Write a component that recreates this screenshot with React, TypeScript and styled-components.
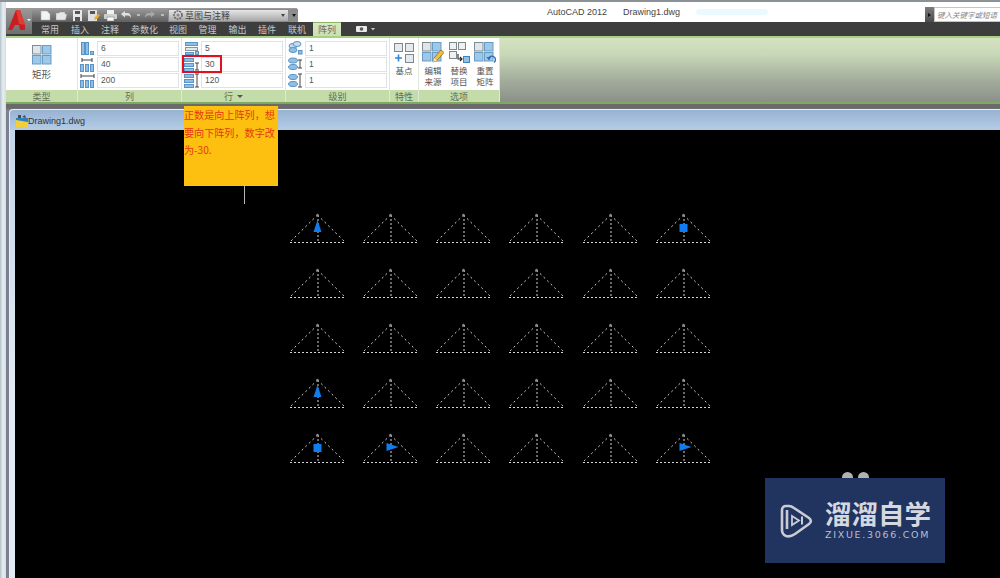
// npm
import React from "react";
import styled, { createGlobalStyle } from "styled-components";

const CJK = `"Noto Sans CJK SC", "Liberation Sans", sans-serif`;
const LATIN = `"Liberation Sans", "Noto Sans CJK SC", sans-serif`;

const GlobalStyle = createGlobalStyle`
    html, body {
        margin: 0;
        padding: 0;
        background: #000;
    }
`;

// data
const TABS = [
    { label: "常用", w: 30 },
    { label: "插入", w: 30 },
    { label: "注释", w: 30 },
    { label: "参数化", w: 39 },
    { label: "视图", w: 28 },
    { label: "管理", w: 31 },
    { label: "输出", w: 29 },
    { label: "插件", w: 30 },
    { label: "联机", w: 30 },
];

const COLS = [290, 363, 436, 509, 583, 656];
const ROWS = [242, 297, 352, 407, 462];

type GripKind = "up" | "square" | "right";
const GRIPS: { col: number; row: number; kind: GripKind }[] = [
    { col: 0, row: 0, kind: "up" },
    { col: 5, row: 0, kind: "square" },
    { col: 0, row: 3, kind: "up" },
    { col: 0, row: 4, kind: "square" },
    { col: 1, row: 4, kind: "right" },
    { col: 5, row: 4, kind: "right" },
];

// ribbon icons
const BLUE = "#8fbfe6";
const EDGE = "#5a94c4";

const Cell = ({ x, y, w, h, on = true }: { x: number; y: number; w: number; h: number; on?: boolean }) => (
    <rect x={x + 0.5} y={y + 0.5} width={w} height={h} fill={on ? BLUE : "#e4e8ea"} stroke={on ? EDGE : "#8b9499"} strokeWidth="1" />
);

const Beam = ({ x, y, len, dir }: { x: number; y: number; len: number; dir: "h" | "v" }) =>
    dir === "h" ? (
        <path d={`M${x} ${y - 2}v4M${x} ${y}h${len}M${x + len} ${y - 2}v4`} stroke="#444" fill="none" />
    ) : (
        <path d={`M${x - 2} ${y}h4M${x} ${y}v${len}M${x - 2} ${y + len}h4`} stroke="#444" fill="none" />
    );

const ICONS: Record<string, React.ReactNode> = {
    colCount: (
        <>
            <Cell x={1} y={1} w={3} h={12} />
            <Cell x={5} y={1} w={3} h={12} />
            <Cell x={10} y={10} w={3} h={3} />
        </>
    ),
    colGap: (
        <>
            <Beam x={2} y={3} len={10} dir="h" />
            <Cell x={0} y={7} w={3} h={7} />
            <Cell x={5} y={7} w={3} h={7} />
            <Cell x={10} y={7} w={3} h={7} />
        </>
    ),
    colTotal: (
        <>
            <Beam x={1} y={3} len={13} dir="h" />
            <Cell x={0} y={7} w={3} h={7} />
            <Cell x={5} y={7} w={3} h={7} />
            <Cell x={10} y={7} w={3} h={7} />
        </>
    ),
    rowCount: (
        <>
            <Cell x={1} y={1} w={12} h={3} />
            <Cell x={1} y={6} w={12} h={3} on={false} />
            <Cell x={1} y={11} w={8} h={2} />
            <Cell x={11} y={10} w={3} h={3} />
        </>
    ),
    rowGap: (
        <>
            <Cell x={0} y={1} w={9} h={3} />
            <Cell x={0} y={6} w={9} h={3} />
            <Cell x={0} y={11} w={9} h={3} />
            <Beam x={13} y={6} len={7} dir="v" />
        </>
    ),
    rowTotal: (
        <>
            <Cell x={0} y={1} w={9} h={3} />
            <Cell x={0} y={6} w={9} h={3} />
            <Cell x={0} y={11} w={9} h={3} />
            <Beam x={13} y={1} len={13} dir="v" />
        </>
    ),
    levelCount: (
        <>
            <ellipse cx="5" cy="5" rx="4" ry="2.5" fill="#c4dcf0" stroke={EDGE} />
            <ellipse cx="9" cy="3" rx="4" ry="2.5" fill="#c4dcf0" stroke={EDGE} />
            <ellipse cx="5" cy="9" rx="4" ry="2.5" fill={BLUE} stroke={EDGE} />
            <rect x="10.5" y="9.5" width="3.5" height="3.5" fill={BLUE} stroke={EDGE} />
        </>
    ),
    levelGap: (
        <>
            <ellipse cx="5" cy="3.5" rx="4.5" ry="2.5" fill={BLUE} stroke={EDGE} />
            <ellipse cx="5" cy="10" rx="4.5" ry="2.5" fill={BLUE} stroke={EDGE} />
            <Beam x={12} y={3} len={8} dir="v" />
        </>
    ),
    levelTotal: (
        <>
            <ellipse cx="5" cy="4" rx="4.5" ry="2.5" fill={BLUE} stroke={EDGE} />
            <ellipse cx="5" cy="11" rx="4.5" ry="2.5" fill={BLUE} stroke={EDGE} />
            <Beam x={12} y={1} len={13} dir="v" />
        </>
    ),
};

const SmallIcon = ({ name }: { name: string }) => (
    <FieldIcon viewBox="0 0 15 15">{ICONS[name]}</FieldIcon>
);

const GridGlyph = () => {
    const cells: [number, number, boolean][] = [
        [0, 0, false],
        [10, 0, true],
        [0, 10, true],
        [10, 10, true],
    ];
    return (
        <g>
            {cells.map(([cx, cy, on]) => (
                <rect
                    key={`${cx}-${cy}`}
                    x={cx + 0.5}
                    y={cy + 0.5}
                    width="8.5"
                    height="8.5"
                    fill={on ? "#9cc8ea" : "#dfe6ea"}
                    stroke={on ? "#6a9cc2" : "#7f8c94"}
                />
            ))}
        </g>
    );
};

const BasePointIcon = () => (
    <LargeIcon viewBox="0 0 22 22">
        <rect x="1.5" y="1.5" width="8" height="8" fill="#e6eaec" stroke="#7f888d" />
        <rect x="12.5" y="1.5" width="8" height="8" fill="#e6eaec" stroke="#7f888d" />
        <rect x="12.5" y="12.5" width="8" height="8" fill="#e6eaec" stroke="#7f888d" />
        <path d="M5.5 12.5v7M2 16h7" stroke="#2f86d8" strokeWidth="1.6" />
    </LargeIcon>
);

const EditIcon = () => (
    <LargeIcon viewBox="0 0 22 22">
        <GridGlyph />
        <path d="M11 20l1-4 7-8 3 2.5-7 8z" fill="#f0c040" stroke="#8a6a20" strokeWidth="0.8" />
        <path d="M11 20l1-4 3 2.5z" fill="#f6e6c0" />
    </LargeIcon>
);

const ReplaceIcon = () => (
    <LargeIcon viewBox="0 0 22 22">
        <rect x="1.5" y="0.5" width="7" height="7" fill="#eef0f1" stroke="#7f888d" />
        <rect x="10.5" y="0.5" width="7" height="7" fill="#eef0f1" stroke="#7f888d" />
        <rect x="1.5" y="9.5" width="7" height="7" fill="#eef0f1" stroke="#7f888d" />
        <path d="M10 12v5h4M12 15l2 2-2 2" stroke="#222" fill="none" strokeWidth="1.1" />
        <rect x="15.5" y="14.5" width="6" height="6" fill="#8fc0e6" stroke="#3d84bd" />
    </LargeIcon>
);

const ResetIcon = () => (
    <LargeIcon viewBox="0 0 22 22">
        <GridGlyph />
        <path d="M14.500 17a3.500 3.500 0 1 1 5.500 3.500" stroke="#2a6fb5" fill="none" strokeWidth="1.4" />
        <path d="M12.500 15l2.500 3.500 2-3.500z" fill="#2a6fb5" />
    </LargeIcon>
);

// title bar icons
const QatGlyph = ({ kind }: { kind: string }) => {
    const paths: Record<string, React.ReactNode> = {
        new: <path d="M1 1h6l3 3v6H1z" fill="#f2f2f2" stroke="#aaa" strokeWidth="0.5" />,
        open: <path d="M0 3h3l1-1h5v2h2L9.500 10H0z" fill="#e6e6e6" stroke="#999" strokeWidth="0.5" />,
        save: (
            <>
                <path d="M1 0h9v11H1z" fill="#e8e8e8" />
                <rect x="3" y="1" width="5" height="3" fill="#555" />
                <rect x="3" y="7" width="5" height="4" fill="#555" />
            </>
        ),
        saveAs: (
            <>
                <path d="M0 0h9v11H0z" fill="#e0e0e0" />
                <rect x="2" y="1" width="5" height="3" fill="#555" />
                <path d="M6 10l1-3 3-3 2 1-3 4z" fill="#e8b030" />
            </>
        ),
        print: (
            <>
                <rect x="3" y="0" width="7" height="4" fill="#f2f2f2" />
                <rect x="0" y="4" width="13" height="5" rx="1" fill="#d0d0d0" />
                <rect x="3" y="7" width="7" height="4" fill="#fafafa" stroke="#777" strokeWidth="0.5" />
            </>
        ),
        undo: <path d="M1 4l4-3v2h2c3 0 4 2 4 5-1-2-2-2.500-4-2.500H5v2z" fill="#e0e0e0" />,
        redo: <path d="M11 4L7 1v2H5C2 3 1 5 1 8c1-2 2-2.500 4-2.500h2v2z" fill="#a8a8a8" />,
    };
    return <QatSvg viewBox="0 0 13 11">{paths[kind]}</QatSvg>;
};

// canvas drawing
const Triangle = ({ x, y }: { x: number; y: number }) => (
    <g fill="none" stroke="#d4d4d4" strokeWidth="1">
        <path d={`M${x} ${y + 0.5}H${x + 55}`} strokeDasharray="2 2" />
        <path d={`M${x + 27.5} ${y - 27}L${x} ${y}`} strokeDasharray="2 3" />
        <path d={`M${x + 27.5} ${y - 27}L${x + 55} ${y}`} strokeDasharray="2 3" />
        <path d={`M${x + 28} ${y - 27}V${y}`} strokeDasharray="2 2" />
        <circle cx={x + 27.5} cy={y - 27} r="1.200" fill="#8c8c8c" stroke="none" />
    </g>
);

const Grip = ({ x, y, kind }: { x: number; y: number; kind: GripKind }) => {
    const cx = x + 27.5;
    if (kind === "square") return <rect x={cx - 4} y={y - 18} width="8" height="8" fill="#0f7cf0" />;
    if (kind === "up") return <path d={`M${cx} ${y - 22}L${cx + 4} ${y - 10}H${cx - 4}z`} fill="#0f7cf0" />;
    return <path d={`M${cx - 4} ${y - 19}L${cx + 8} ${y - 15}L${cx - 4} ${y - 11}z`} fill="#0f7cf0" />;
};

const Drawing = () => (
    <DrawingSvg viewBox="15 130 985 448">
        {ROWS.map((y) => COLS.map((x) => <Triangle key={`${x}-${y}`} x={x} y={y} />))}
        {GRIPS.map((g) => (
            <Grip key={`${g.col}-${g.row}`} x={COLS[g.col]} y={ROWS[g.row]} kind={g.kind} />
        ))}
        <path d="M244.500 186V204" stroke="#b8b8b8" strokeWidth="1" />
    </DrawingSvg>
);

const App = () => {
    return (
        <Page>
            <GlobalStyle />
            <TopEdge />
            <Body>
                <LeftEdge />
                <Main>
                    <AppLogo>
                        <svg width="26" height="26" viewBox="0 0 26 26">
                            <path d="M2 22L10 2h4l5 15 0 5h-5l-1-5H9l-3 5z" fill="#c61f22" />
                            <path d="M10 2h4l5 15-6-1z" fill="#e23a34" />
                            <path d="M21 11h4l-2 2.500z" fill="#eee" />
                        </svg>
                    </AppLogo>
                    <TitleBar>
                        <Qat>
                            <QatGlyph kind="new" />
                            <QatGlyph kind="open" />
                            <QatGlyph kind="save" />
                            <QatGlyph kind="saveAs" />
                            <QatGlyph kind="print" />
                            <QatGlyph kind="undo" />
                            <QatDot />
                            <QatGlyph kind="redo" />
                            <QatDot />
                            <Workspace>
                                <svg width="12" height="12" viewBox="0 0 12 12">
                                    <circle cx="6" cy="6" r="4" fill="none" stroke="#666" strokeWidth="1.6" strokeDasharray="2 0.8" />
                                    <circle cx="6" cy="6" r="1.500" fill="#888" />
                                </svg>
                                <WorkspaceLabel>草图与注释</WorkspaceLabel>
                                <Caret />
                            </Workspace>
                            <QatMenu>
                                <Caret $light />
                            </QatMenu>
                        </Qat>
                        <AppTitle>
                            <span>AutoCAD 2012</span>
                            <span>Drawing1.dwg</span>
                            <TitleSmudge />
                        </AppTitle>
                        <Search>
                            <SearchArrow />
                            <SearchInput>键入关键字或短语</SearchInput>
                        </Search>
                    </TitleBar>
                    <TabBar>
                        {TABS.map((t) => (
                            <Tab key={t.label} $w={t.w}>
                                {t.label}
                            </Tab>
                        ))}
                        <ActiveTab>阵列</ActiveTab>
                        <CameraTab>
                            <svg width="20" height="8" viewBox="0 0 20 8">
                                <rect x="0" y="1" width="11" height="6" rx="1" fill="#e8e8e8" />
                                <circle cx="5.500" cy="4" r="1.800" fill="#555" />
                                <path d="M15 3h4l-2 2.500z" fill="#ccc" />
                            </svg>
                        </CameraTab>
                    </TabBar>
                    <Ribbon>
                        <Panel $w={72}>
                            <PanelBody>
                                <BigButton>
                                    <RectIcon viewBox="0 0 20 20">
                                        <GridGlyph />
                                    </RectIcon>
                                    <BigLabel>矩形</BigLabel>
                                </BigButton>
                            </PanelBody>
                            <PanelFooter>类型</PanelFooter>
                        </Panel>
                        <Panel $w={104}>
                            <FieldStack>
                                <FieldRow>
                                    <SmallIcon name="colCount" />
                                    <Field>6</Field>
                                </FieldRow>
                                <FieldRow>
                                    <SmallIcon name="colGap" />
                                    <Field>40</Field>
                                </FieldRow>
                                <FieldRow>
                                    <SmallIcon name="colTotal" />
                                    <Field>200</Field>
                                </FieldRow>
                            </FieldStack>
                            <PanelFooter>列</PanelFooter>
                        </Panel>
                        <Panel $w={104}>
                            <FieldStack>
                                <FieldRow>
                                    <SmallIcon name="rowCount" />
                                    <Field>5</Field>
                                </FieldRow>
                                <FieldRow>
                                    <SmallIcon name="rowGap" />
                                    <Field>30</Field>
                                    <Highlight />
                                </FieldRow>
                                <FieldRow>
                                    <SmallIcon name="rowTotal" />
                                    <Field>120</Field>
                                </FieldRow>
                            </FieldStack>
                            <PanelFooter>
                                行 <FooterCaret />
                            </PanelFooter>
                        </Panel>
                        <Panel $w={104}>
                            <FieldStack>
                                <FieldRow>
                                    <SmallIcon name="levelCount" />
                                    <Field>1</Field>
                                </FieldRow>
                                <FieldRow>
                                    <SmallIcon name="levelGap" />
                                    <Field>1</Field>
                                </FieldRow>
                                <FieldRow>
                                    <SmallIcon name="levelTotal" />
                                    <Field>1</Field>
                                </FieldRow>
                            </FieldStack>
                            <PanelFooter>级别</PanelFooter>
                        </Panel>
                        <Panel $w={29}>
                            <ToolRow>
                                <Tool>
                                    <BasePointIcon />
                                    <ToolLabel>基点</ToolLabel>
                                </Tool>
                            </ToolRow>
                            <PanelFooter>特性</PanelFooter>
                        </Panel>
                        <Panel $w={81}>
                            <ToolRow>
                                <Tool>
                                    <EditIcon />
                                    <ToolLabel>
                                        编辑
                                        <br />
                                        来源
                                    </ToolLabel>
                                </Tool>
                                <Tool>
                                    <ReplaceIcon />
                                    <ToolLabel>
                                        替换
                                        <br />
                                        项目
                                    </ToolLabel>
                                </Tool>
                                <Tool>
                                    <ResetIcon />
                                    <ToolLabel>
                                        重置
                                        <br />
                                        矩阵
                                    </ToolLabel>
                                </Tool>
                            </ToolRow>
                            <PanelFooter>选项</PanelFooter>
                        </Panel>
                        <RibbonRest />
                    </Ribbon>
                    <DocArea>
                        <DocWindow>
                            <DocTitle>
                                <svg width="12" height="13" viewBox="0 0 12 13">
                                    <rect x="0" y="4" width="12" height="9" fill="#f2cf3a" />
                                    <path d="M0 4h12v4L0 6z" fill="#2f7fc0" />
                                    <path d="M2 4V1h3v3zM6 3l3-2 1 3z" fill="#4a4a4a" />
                                </svg>
                                <span>Drawing1.dwg</span>
                            </DocTitle>
                            <CanvasFrame>
                                <Canvas>
                                    <Drawing />
                                    <Bumps>
                                        <Bump />
                                        <Bump />
                                    </Bumps>
                                    <Watermark>
                                        <svg width="34" height="36" viewBox="0 0 34 36">
                                            <path
                                                d="M6 3h3c2 0 3 .5 5 2l15 10c2.500 1.800 2.500 4.200 0 6L15 31c-3 2-6 3-9 2-2.500-1-4-3-4-6V7c0-2.500 1.500-4 4-4z"
                                                fill="none"
                                                stroke="#c9ccd4"
                                                strokeWidth="2.600"
                                            />
                                            <path d="M7 7v19" stroke="#c9ccd4" strokeWidth="2.600" fill="none" />
                                            <path d="M12 13l7 4.500-7 4.500z" fill="none" stroke="#c9ccd4" strokeWidth="1.800" />
                                            <path d="M22 13.500v8" stroke="#c9ccd4" strokeWidth="2" />
                                        </svg>
                                        <BrandText>
                                            <BrandName>溜溜自学</BrandName>
                                            <BrandUrl>ZIXUE.3066.COM</BrandUrl>
                                        </BrandText>
                                    </Watermark>
                                </Canvas>
                            </CanvasFrame>
                        </DocWindow>
                    </DocArea>
                </Main>
            </Body>
            <Note>正数是向上阵列，想要向下阵列，数字改为-30.</Note>
        </Page>
    );
};

const Page = styled.div`
    position: relative;
    width: 1000px;
    height: 578px;
    overflow: hidden;
    display: flex;
    flex-direction: column;
    background: #d5dee6;
    font-family: ${CJK};
`;

const TopEdge = styled.div`
    height: 2px;
    flex: none;
    background: #8b9296;
`;

const Body = styled.div`
    flex: 1;
    display: flex;
    min-height: 0;
`;

const LeftEdge = styled.div`
    width: 6px;
    flex: none;
    background: linear-gradient(90deg, #b4c2ca, #e8eef2 50%, #d4dde4);
`;

const Main = styled.div`
    position: relative;
    flex: 1;
    display: flex;
    flex-direction: column;
    min-width: 0;
`;

const AppLogo = styled.div`
    position: absolute;
    left: 0;
    top: 6px;
    width: 26px;
    height: 26px;
    z-index: 2;
    background: linear-gradient(#9a9a9a, #6e6e6e);
`;

const TitleBar = styled.div`
    height: 20px;
    flex: none;
    display: flex;
    align-items: flex-end;
    background: #fff;
`;

const Qat = styled.div`
    height: 14px;
    width: 265px;
    margin-left: 26px;
    flex: none;
    display: flex;
    align-items: center;
    gap: 3px;
    padding-left: 8px;
    box-sizing: border-box;
    background: linear-gradient(#9c9c9c, #5f5f5f);
`;

const QatSvg = styled.svg`
    width: 13px;
    height: 11px;
    flex: none;
`;

const QatDot = styled.span`
    width: 3px;
    height: 2px;
    flex: none;
    background: #bbb;
    margin: 0 1px;
`;

const Workspace = styled.div`
    width: 121px;
    height: 13px;
    flex: none;
    display: flex;
    align-items: center;
    gap: 1px;
    padding: 0 3px;
    box-sizing: border-box;
    background: linear-gradient(#e6e6e6, #a8a8a8);
    border: 1px solid #8a8a8a;
`;

const WorkspaceLabel = styled.span`
    flex: 1;
    font-size: 9px;
    line-height: 11px;
    color: #444;
`;

const Caret = styled.i<{ $light?: boolean }>`
    width: 0;
    height: 0;
    border-left: 2.5px solid transparent;
    border-right: 2.5px solid transparent;
    border-top: 3px solid ${({ $light }) => ($light ? "#111" : "#444")};
`;

const QatMenu = styled.div`
    width: 9px;
    height: 13px;
    margin-left: -3px;
    flex: none;
    display: flex;
    align-items: center;
    justify-content: center;
    background: #8d8d8d;
`;

const AppTitle = styled.div`
    display: flex;
    align-items: center;
    gap: 16px;
    margin-left: 250px;
    align-self: center;
    font-family: ${LATIN};
    font-size: 9px;
    color: #444;
`;

const TitleSmudge = styled.i`
    display: block;
    width: 72px;
    height: 6px;
    border-radius: 3px;
    background: #eafaff;
`;

const Search = styled.div`
    margin-left: auto;
    width: 75px;
    height: 15px;
    flex: none;
    display: flex;
`;

const SearchArrow = styled.div`
    width: 9px;
    flex: none;
    background: linear-gradient(#7c7c7c, #4c4c4c);
    display: flex;
    align-items: center;
    justify-content: center;
    &::after {
        content: "";
        border-top: 2.5px solid transparent;
        border-bottom: 2.5px solid transparent;
        border-left: 3px solid #111;
    }
`;

const SearchInput = styled.div`
    flex: 1;
    background: #fff;
    border: 1px solid #c4c4c4;
    border-right: 0;
    font-size: 7.5px;
    line-height: 13px;
    font-style: italic;
    color: #888;
    padding-left: 2px;
    white-space: nowrap;
    overflow: hidden;
`;

const TabBar = styled.div`
    height: 14px;
    flex: none;
    display: flex;
    align-items: stretch;
    padding-left: 29px;
    background: #3d3d3d;
`;

const Tab = styled.div<{ $w: number }>`
    width: ${({ $w }) => $w}px;
    text-align: center;
    font-size: 9px;
    line-height: 15px;
    color: #c6c6c6;
`;

const ActiveTab = styled.div`
    width: 28px;
    margin-left: 1px;
    text-align: center;
    font-size: 9px;
    line-height: 14px;
    color: #666;
    background: linear-gradient(#d8e8c8, #c8e0b0);
    border-top: 1px solid #8cb860;
    box-sizing: border-box;
`;

const CameraTab = styled.div`
    margin-left: 15px;
    display: flex;
    align-items: center;
`;

const Ribbon = styled.div`
    height: 68px;
    flex: none;
    display: flex;
    background: #fff;
    border-top: 2px solid #a8d088;
    border-bottom: 2px solid #7fa860;
    box-sizing: border-box;
`;

const Panel = styled.div<{ $w: number }>`
    width: ${({ $w }) => $w}px;
    flex: none;
    display: flex;
    flex-direction: column;
    box-sizing: border-box;
    border-right: 1px solid #dfe6da;
`;

const PanelBody = styled.div`
    flex: 1;
    display: flex;
    align-items: flex-start;
    justify-content: center;
`;

const PanelFooter = styled.div`
    height: 12px;
    flex: none;
    display: flex;
    align-items: center;
    justify-content: center;
    gap: 4px;
    font-size: 9px;
    color: #607058;
    background: #c4dcaa;
`;

const FooterCaret = styled.i`
    width: 0;
    height: 0;
    border-left: 3px solid transparent;
    border-right: 3px solid transparent;
    border-top: 3px solid #555;
`;

const BigButton = styled.div`
    display: flex;
    flex-direction: column;
    align-items: center;
    gap: 2px;
    padding-top: 7px;
`;

const RectIcon = styled.svg`
    width: 20px;
    height: 20px;
`;

const BigLabel = styled.span`
    font-size: 9.5px;
    line-height: 14px;
    color: #555;
`;

const FieldStack = styled.div`
    flex: 1;
    display: flex;
    flex-direction: column;
    gap: 1px;
    padding: 3px 2px 0 2px;
`;

const FieldRow = styled.div`
    position: relative;
    height: 15px;
    display: flex;
    align-items: center;
    gap: 2px;
`;

const FieldIcon = styled.svg`
    width: 15px;
    height: 15px;
    flex: none;
`;

const Field = styled.div`
    flex: 1;
    height: 15px;
    box-sizing: border-box;
    border: 1px solid #dde3e6;
    background: #fff;
    font-family: ${LATIN};
    font-size: 8.5px;
    line-height: 13px;
    color: #555;
    padding-left: 3px;
`;

const Highlight = styled.span`
    position: absolute;
    left: -2px;
    top: -2px;
    width: 40px;
    height: 18px;
    box-sizing: border-box;
    border: 2px solid #e01020;
`;

const ToolRow = styled.div`
    flex: 1;
    display: flex;
    justify-content: center;
    gap: 4px;
    padding-top: 4px;
`;

const Tool = styled.div`
    width: 22px;
    display: flex;
    flex-direction: column;
    align-items: center;
    gap: 1px;
`;

const LargeIcon = styled.svg`
    width: 22px;
    height: 22px;
    flex: none;
`;

const ToolLabel = styled.span`
    font-size: 8.5px;
    line-height: 11px;
    color: #555;
    text-align: center;
    white-space: nowrap;
`;

const RibbonRest = styled.div`
    flex: 1;
    background: linear-gradient(#d4e2c0, #c8d8b8 25%, #a4ae9c 65%, #8b908a);
`;

const DocArea = styled.div`
    flex: 1;
    min-height: 0;
    display: flex;
    padding: 5px 0 0 3px;
    background: linear-gradient(#6a6a6a, #6a6a6a 4px, #7c8090 6px);
`;

const DocWindow = styled.div`
    flex: 1;
    min-width: 0;
    display: flex;
    flex-direction: column;
    border-radius: 4px 0 0 0;
    border-top: 1px solid #e8eef4;
    border-left: 1px solid #e8eef4;
    background: #b6cce4;
`;

const DocTitle = styled.div`
    height: 20px;
    flex: none;
    display: flex;
    align-items: center;
    padding: 1px 0 0 6px;
    box-sizing: border-box;
    font-family: ${LATIN};
    font-size: 9px;
    color: #333;
    background: linear-gradient(#98b2d2, #b4cce6);
    border-radius: 4px 0 0 0;
`;

const CanvasFrame = styled.div`
    flex: 1;
    min-height: 0;
    display: flex;
    padding-left: 5px;
    background: linear-gradient(#c4d6e8, #e2ebf3 60%);
`;

const Canvas = styled.div`
    position: relative;
    flex: 1;
    background: #000;
`;

const DrawingSvg = styled.svg`
    position: absolute;
    left: 0;
    top: 0;
    width: 985px;
    height: 448px;
`;

const Bumps = styled.div`
    position: absolute;
    left: 827px;
    top: 342px;
    display: flex;
    gap: 5px;
`;

const Bump = styled.i`
    display: block;
    width: 11px;
    height: 11px;
    border-radius: 50%;
    background: #b0b4ae;
`;

const Watermark = styled.div`
    position: absolute;
    left: 750px;
    top: 348px;
    width: 180px;
    height: 85px;
    box-sizing: border-box;
    padding: 0 0 0 15px;
    display: flex;
    align-items: center;
    gap: 11px;
    background: #21335f;
`;

const BrandText = styled.div`
    display: flex;
    flex-direction: column;
    gap: 3px;
`;

const BrandName = styled.div`
    height: 26px;
    font-size: 26.5px;
    line-height: 26px;
    font-weight: 700;
    color: #d5d8df;
    white-space: nowrap;
`;

const BrandUrl = styled.div`
    font-family: "DejaVu Sans", sans-serif;
    font-size: 9.5px;
    line-height: 12px;
    letter-spacing: 1.7px;
    color: #b9bfcd;
    white-space: nowrap;
`;

const Note = styled.div`
    position: absolute;
    left: 184px;
    top: 106px;
    width: 94px;
    height: 80px;
    background: #fdc010;
    color: #e5380f;
    font-size: 10.1px;
    line-height: 17.5px;
    word-break: break-all;
`;

export default App;
